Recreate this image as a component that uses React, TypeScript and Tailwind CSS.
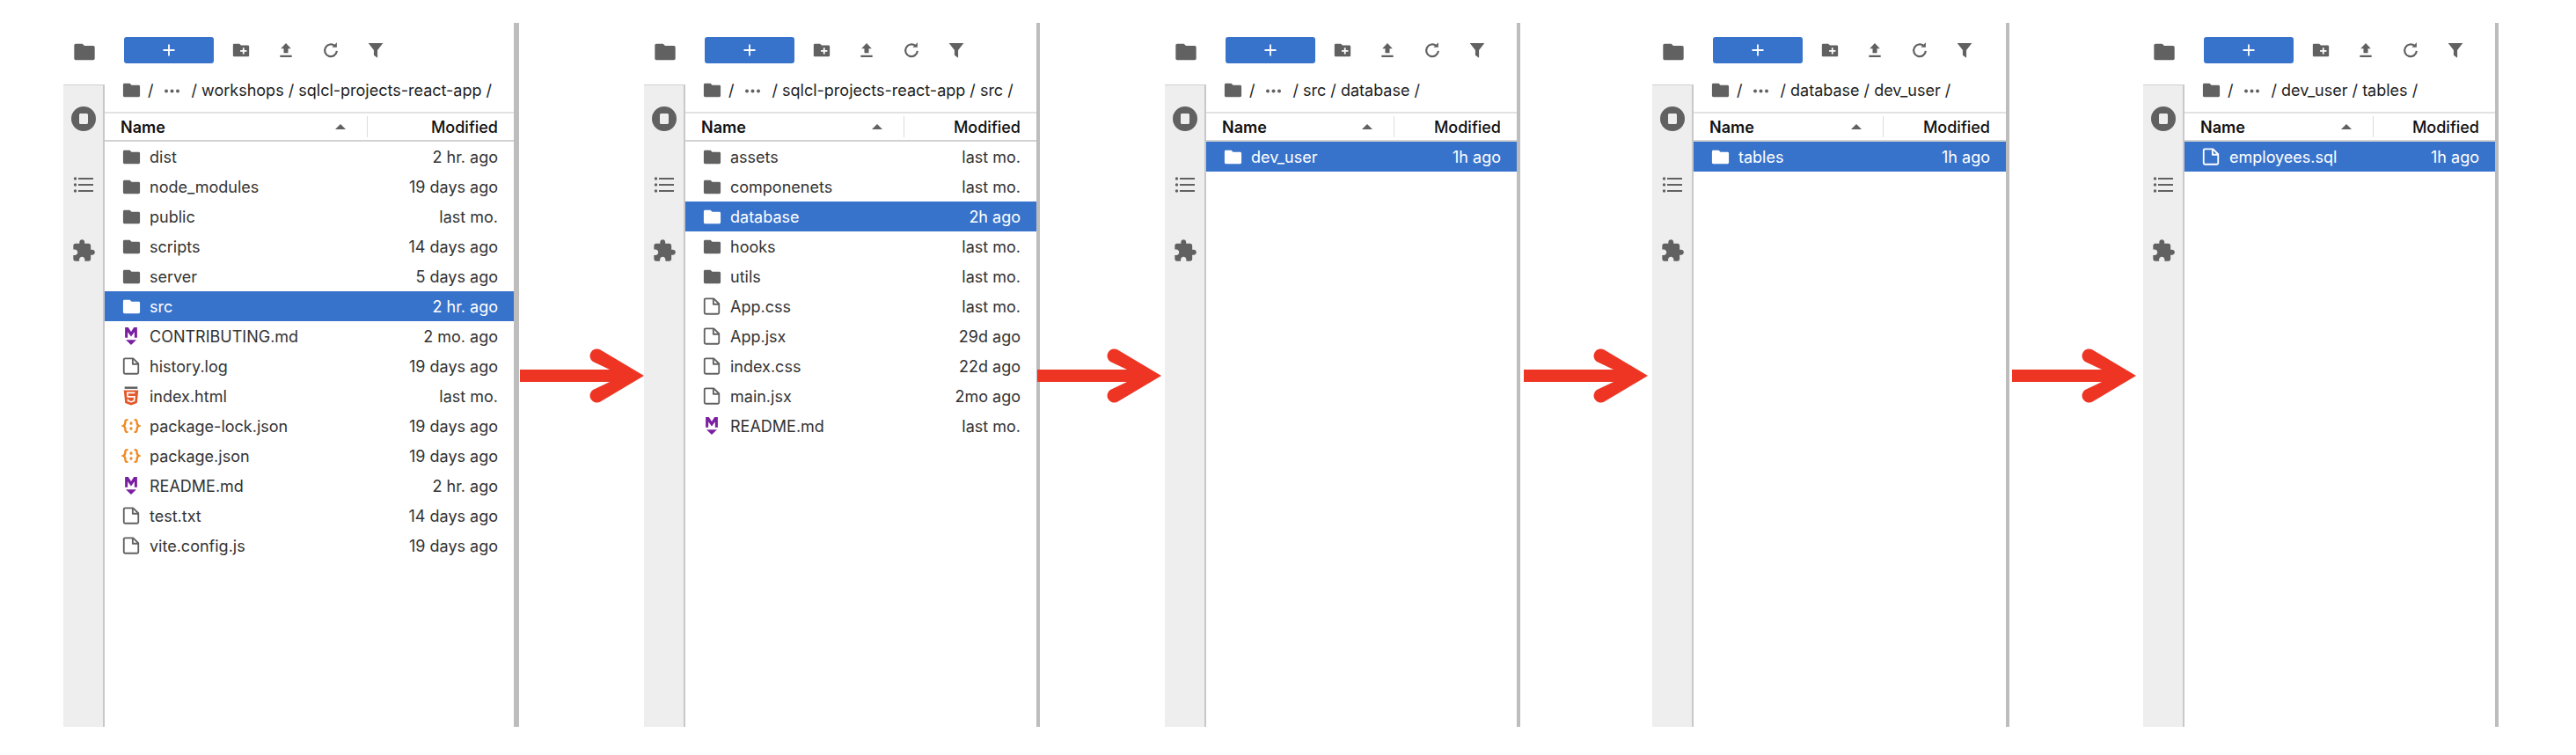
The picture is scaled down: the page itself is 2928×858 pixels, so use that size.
type Row = { name: string; time: string; icon: "folder" | "file" | "md" | "html" | "json" };
type Panel = {
  width: string;
  edge: string;
  split: string;
  crumb: string;
  rows: Row[];
  selected: string;
};

const panels: Panel[] = [
  {
    width: "w-[518px]",
    edge: "border-r-[6px]",
    split: "w-[167px]",
    crumb: "/ workshops / sqlcl-projects-react-app /",
    selected: "src",
    rows: [
      { name: "dist", time: "2 hr. ago", icon: "folder" },
      { name: "node_modules", time: "19 days ago", icon: "folder" },
      { name: "public", time: "last mo.", icon: "folder" },
      { name: "scripts", time: "14 days ago", icon: "folder" },
      { name: "server", time: "5 days ago", icon: "folder" },
      { name: "src", time: "2 hr. ago", icon: "folder" },
      { name: "CONTRIBUTING.md", time: "2 mo. ago", icon: "md" },
      { name: "history.log", time: "19 days ago", icon: "file" },
      { name: "index.html", time: "last mo.", icon: "html" },
      { name: "package-lock.json", time: "19 days ago", icon: "json" },
      { name: "package.json", time: "19 days ago", icon: "json" },
      { name: "README.md", time: "2 hr. ago", icon: "md" },
      { name: "test.txt", time: "14 days ago", icon: "file" },
      { name: "vite.config.js", time: "19 days ago", icon: "file" },
    ],
  },
  {
    width: "w-[450px]",
    edge: "border-r-4",
    split: "w-[151px]",
    crumb: "/ sqlcl-projects-react-app / src /",
    selected: "database",
    rows: [
      { name: "assets", time: "last mo.", icon: "folder" },
      { name: "componenets", time: "last mo.", icon: "folder" },
      { name: "database", time: "2h ago", icon: "folder" },
      { name: "hooks", time: "last mo.", icon: "folder" },
      { name: "utils", time: "last mo.", icon: "folder" },
      { name: "App.css", time: "last mo.", icon: "file" },
      { name: "App.jsx", time: "29d ago", icon: "file" },
      { name: "index.css", time: "22d ago", icon: "file" },
      { name: "main.jsx", time: "2mo ago", icon: "file" },
      { name: "README.md", time: "last mo.", icon: "md" },
    ],
  },
  {
    width: "w-[404px]",
    edge: "border-r-4",
    split: "w-[140px]",
    crumb: "/ src / database /",
    selected: "dev_user",
    rows: [{ name: "dev_user", time: "1h ago", icon: "folder" }],
  },
  {
    width: "w-[406px]",
    edge: "border-r-4",
    split: "w-[140px]",
    crumb: "/ database / dev_user /",
    selected: "tables",
    rows: [{ name: "tables", time: "1h ago", icon: "folder" }],
  },
  {
    width: "w-[404px]",
    edge: "border-r-4",
    split: "w-[139px]",
    crumb: "/ dev_user / tables /",
    selected: "employees.sql",
    rows: [{ name: "employees.sql", time: "1h ago", icon: "file" }],
  },
];

// gap between panel i and i+1, and how far the arrow tip stops short of the next panel
const arrows = [
  { gap: "w-[142px]", inset: "mr-0" },
  { gap: "w-[142px]", inset: "mr-[4px]" },
  { gap: "w-[150px]", inset: "mr-[5px]" },
  { gap: "w-[152px]", inset: "mr-[8px]" },
];

function FolderIcon({ className }: { className: string }) {
  return (
    <svg viewBox="0 0 24 24" className={className} fill="currentColor">
      <path d="M10 4H3.500C2.700 4 2 4.700 2 5.500v13c0 .8.7 1.500 1.500 1.500h17c.8 0 1.500-.7 1.500-1.500v-11C22 6.700 21.300 6 20.500 6H12z" />
    </svg>
  );
}

function FileIcon({ className }: { className: string }) {
  return (
    <svg viewBox="0 0 24 24" className={className} fill="none" stroke="currentColor" strokeWidth="2" strokeLinejoin="round">
      <path d="M4.500 2.500h10L21 9v11a1.500 1.500 0 0 1-1.500 1.500h-15A1.500 1.500 0 0 1 3 20V4a1.500 1.500 0 0 1 1.500-1.500z" />
      <path d="M14 3v6.500h7" />
    </svg>
  );
}

function MarkdownIcon() {
  return (
    <svg viewBox="0 0 24 24" className="w-[22px] h-[22px] text-[#7b1fa2]" fill="currentColor">
      <path d="M4.500 1h4L12 6.500 15.500 1h4v13h-3.300V6.800L12 12.500 7.800 6.800V14H4.500z" />
      <path d="M5.500 16.500h13L12 23z" />
    </svg>
  );
}

function HtmlIcon() {
  return (
    <svg viewBox="0 0 24 24" className="w-[22px] h-[24px]" fill="none">
      <rect x="4" y="0.500" width="16" height="2.600" fill="#5a5a5a" />
      <path d="M3 5h18l-1.600 15.800L12 23.500l-7.400-2.700z" fill="#e4572b" />
      <path d="M16.800 8H7.400l.4 5h8.500l-.5 5-3.800 1.300L8.200 18l-.2-2" stroke="#fff" strokeWidth="1.800" />
    </svg>
  );
}

function JsonIcon() {
  return (
    <svg viewBox="0 0 24 24" className="w-[22px] h-[22px]" fill="none" stroke="#f08a24" strokeWidth="2.600" strokeLinecap="round">
      <path d="M7 4.500C4.800 4.500 4.800 6 4.800 8c0 2.200-.6 3.200-2.500 4 1.900.8 2.500 1.800 2.500 4s0 3.500 2.200 3.500" />
      <path d="M17 4.500c2.200 0 2.200 1.500 2.200 3.500 0 2.200.6 3.200 2.500 4-1.900.8-2.500 1.800-2.500 4s0 3.500-2.200 3.500" />
      <path d="M12 8.500v.5M12 15v.5" strokeWidth="3.400" />
    </svg>
  );
}

function RowIcon({ icon, active }: { icon: Row["icon"]; active: boolean }) {
  if (icon === "folder") {
    return <FolderIcon className={`w-[23px] h-[23px] ${active ? "text-white" : "text-[#616161]"}`} />;
  }
  if (icon === "file") {
    return <FileIcon className={`w-[22px] h-[22px] ${active ? "text-white" : "text-[#616161]"}`} />;
  }
  if (icon === "md") return <MarkdownIcon />;
  if (icon === "html") return <HtmlIcon />;
  return <JsonIcon />;
}

function Toolbar() {
  return (
    <div className="flex items-center h-[30px] mt-[16px] ml-[22px] text-[#616161]">
      <button className="w-[102px] h-[30px] rounded-[3px] bg-[#3873cb] flex items-center justify-center">
        <svg viewBox="0 0 16 16" className="w-[16px] h-[16px]" stroke="#fff" strokeWidth="1.800">
          <path d="M8 1.500v13M1.500 8h13" />
        </svg>
      </button>
      <div className="ml-[21px] flex items-center gap-[31px]">
        <svg viewBox="0 0 24 24" className="w-[22px] h-[22px] -mx-[1px]" fill="currentColor">
          <path d="M10 4H3.500C2.700 4 2 4.700 2 5.500v13c0 .8.7 1.500 1.500 1.500h17c.8 0 1.500-.7 1.500-1.500v-11C22 6.700 21.300 6 20.500 6H12zm9 10h-3v3h-2v-3h-3v-2h3V9h2v3h3z" />
        </svg>
        <svg viewBox="0 0 24 24" className="w-[20px] h-[20px]" fill="currentColor">
          <path d="M9 16V10H5l7-7.500L19 10h-4v6zM4 19h16v2.500H4z" />
        </svg>
        <svg viewBox="0 0 24 24" className="w-[22px] h-[22px] -mx-[1px]" fill="none" stroke="currentColor" strokeWidth="2.400">
          <path d="M19.500 13a7.500 7.500 0 1 1-2.500-6.300" />
          <path d="M19.500 2.500v6h-6" fill="currentColor" stroke="none" />
        </svg>
        <svg viewBox="0 0 24 24" className="w-[20px] h-[20px]" fill="currentColor">
          <path d="M2 2.500h20L14.500 12v10.500l-5-3.500v-7z" />
        </svg>
      </div>
    </div>
  );
}

function SideRail() {
  return (
    <div className="flex-1 bg-[#eeeeee] border-r-2 border-[#c8c8c8] border-t border-t-[#d0d0d0] flex flex-col items-center pt-[24px] gap-[49px] text-[#616161]">
      <svg viewBox="0 0 28 28" className="w-[28px] h-[28px] shrink-0" fill="currentColor">
        <path fillRule="evenodd" d="M14 0a14 14 0 1 0 0 28 14 14 0 0 0 0-28zM9 9.500C9 8.700 9.700 8 10.500 8h7c.8 0 1.500.7 1.500 1.500v9c0 .8-.7 1.500-1.500 1.500h-7A1.500 1.500 0 0 1 9 18.500z" />
      </svg>
      <svg viewBox="0 0 24 24" className="w-[24px] h-[24px] shrink-0" fill="currentColor">
        <circle cx="2.500" cy="5" r="1.700" />
        <circle cx="2.500" cy="12" r="1.700" />
        <circle cx="2.500" cy="19" r="1.700" />
        <rect x="6" y="4" width="17" height="2" />
        <rect x="6" y="11" width="17" height="2" />
        <rect x="6" y="18" width="17" height="2" />
      </svg>
      <svg viewBox="0 0 24 24" className="w-[28px] h-[28px] shrink-0" fill="currentColor">
        <path d="M20.500 11H19V7c0-1.100-.9-2-2-2h-4V3.500C13 2.120 11.880 1 10.500 1S8 2.120 8 3.500V5H4c-1.100 0-1.990.9-1.990 2v3.800H3.500c1.490 0 2.700 1.210 2.700 2.700s-1.210 2.700-2.700 2.700H2V20c0 1.100.9 2 2 2h3.800v-1.500c0-1.490 1.210-2.700 2.700-2.700 1.490 0 2.700 1.210 2.700 2.700V22H17c1.100 0 2-.9 2-2v-4h1.500c1.380 0 2.500-1.120 2.500-2.500S21.880 11 20.500 11z" />
      </svg>
    </div>
  );
}

function FilePanel({ panel }: { panel: Panel }) {
  return (
    <div className={`${panel.width} ${panel.edge} shrink-0 h-[800px] flex border-[#bdbdbd]`}>
      <div className="w-[47px] shrink-0 flex flex-col">
        <div className="h-[70px] shrink-0 flex items-start justify-center pt-[19px]">
          <FolderIcon className="w-[28px] h-[28px] text-[#616161]" />
        </div>
        <SideRail />
      </div>
      <div className="flex-1 min-w-0 flex flex-col">
        <Toolbar />
        <div className="h-[55px] flex items-center pl-[19px] pt-[5px] text-[18px] text-[#222] whitespace-nowrap">
          <FolderIcon className="w-[23px] h-[23px] text-[#616161]" />
          <span className="ml-[7px]">/</span>
          <svg viewBox="0 0 17 5" className="w-[17px] h-[5px] ml-[12px] mr-[14px] mt-[2px] text-[#616161]" fill="currentColor">
            <circle cx="2" cy="2.500" r="2" />
            <circle cx="8.500" cy="2.500" r="2" />
            <circle cx="15" cy="2.500" r="2" />
          </svg>
          <span>{panel.crumb}</span>
        </div>
        <div className="h-[34px] flex items-center border-t-2 border-[#e2e2e2] border-b-2 border-b-[#d2d2d2] text-[18px] text-[#111]">
          <div className="flex-1 pl-[18px] pr-[24px] flex items-center justify-between font-semibold">
            <span>Name</span>
            <span className="w-0 h-0 border-x-[6px] border-x-transparent border-b-[6px] border-b-[#616161]" />
          </div>
          <div className={`${panel.split} h-[24px] border-l border-[#dddddd] flex items-center justify-end pr-[18px] font-medium`}>
            Modified
          </div>
        </div>
        {panel.rows.map((row) => {
          const active = row.name === panel.selected;
          return (
            <div
              key={row.name}
              className={`h-[34px] flex items-center pl-[19px] pr-[18px] text-[18px] ${active ? "bg-[#3873cb] text-white" : "text-[#333]"}`}
            >
              <span className="w-[32px] shrink-0 flex items-center">
                <RowIcon icon={row.icon} active={active} />
              </span>
              <span className="flex-1">{row.name}</span>
              <span>{row.time}</span>
            </div>
          );
        })}
      </div>
    </div>
  );
}

function Arrow({ gap, inset }: { gap: string; inset: string }) {
  return (
    <div className={`${gap} shrink-0 h-[800px] flex items-center justify-end`}>
      <svg viewBox="0 0 141 64" className={`${inset} w-[141px] h-[64px] mt-[2px] shrink-0 relative`}>
        <path
          d="M141 32L91 2.200A8 8 0 0 0 83 16L102 25H0V39H102L83 48A8 8 0 0 0 91 61.800Z"
          fill="#ee3524"
        />
      </svg>
    </div>
  );
}

export default function App() {
  return (
    <div className="w-[2928px] h-[858px] bg-white pt-[26px] pl-[72px] flex items-start font-['Inter','Liberation_Sans',sans-serif]">
      {panels.map((panel, i) => (
        <div key={panel.crumb} className="contents">
          {i > 0 && <Arrow gap={arrows[i - 1].gap} inset={arrows[i - 1].inset} />}
          <FilePanel panel={panel} />
        </div>
      ))}
    </div>
  );
}
